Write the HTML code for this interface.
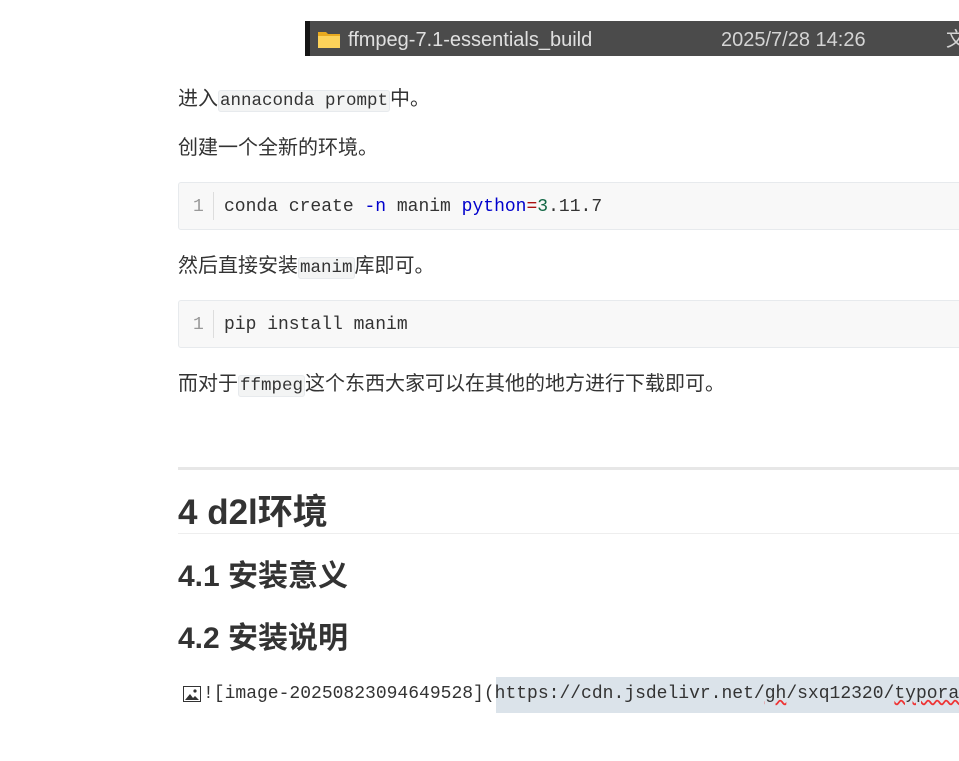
<!DOCTYPE html>
<html><head><meta charset="utf-8"><style>
body{margin:0;width:959px;height:761px;background:#fff;overflow:hidden;position:relative;font-family:"Liberation Sans","Noto Sans CJK SC",sans-serif;color:#333}
.a{position:absolute;white-space:nowrap}
.p{font-size:20px;line-height:26px}
.m{font-family:"Liberation Mono","DejaVu Sans Mono",monospace;font-size:18px;letter-spacing:0}
.ic{background:#f3f4f4;border:1px solid #e7eaed;border-radius:3px;padding:0 1px;font-size:17.5px}
.cb{position:absolute;left:178px;width:790px;height:48px;background:#f8f8f8;border:1px solid #e7eaed;border-radius:3px;box-sizing:border-box}
.ln{position:absolute;left:14px;top:12px;color:#999;font-family:"Liberation Mono",monospace;font-size:18px;line-height:24px}
.sep{position:absolute;left:34px;top:9px;width:1px;height:28px;background:#ddd}
.ct{position:absolute;left:45px;top:12px;line-height:24px;color:#333}
h1,h2{margin:0;font-weight:bold}
</style></head><body>
<div class="a" style="left:305px;top:21px;width:660px;height:35px;background:#4b4b4b;border-left:5px solid #151515;box-sizing:border-box"></div>
<svg class="a" style="left:317px;top:29px" width="24" height="20" viewBox="0 0 24 20"><path d="M1 3h8l2 2h12v14H1z" fill="#e8a91f"/><path d="M1 7h22v12H1z" fill="#fcd25a"/></svg>
<div class="a" style="left:348px;top:27px;font-size:20px;color:#e0e0e0;line-height:26px">ffmpeg-7.1-essentials_build</div>
<div class="a" style="left:721px;top:27px;font-size:20px;color:#d4d4d4;line-height:26px">2025/7/28 14:26</div>
<div class="a" style="left:946px;top:27px;font-size:20px;color:#d4d4d4;line-height:26px">文</div>

<div class="a p" style="left:178px;top:86px">进入<span class="m ic">annaconda prompt</span>中。</div>
<div class="a p" style="left:178px;top:135px">创建一个全新的环境。</div>
<div class="cb" style="top:182px"><div class="ln">1</div><div class="sep"></div><div class="ct m">conda create <span style="color:#00c">-n</span> manim <span style="color:#00c">python</span><span style="color:#a11">=</span><span style="color:#164">3</span>.11.7</div></div>
<div class="a p" style="left:178px;top:253px">然后直接安装<span class="m ic">manim</span>库即可。</div>
<div class="cb" style="top:300px"><div class="ln">1</div><div class="sep"></div><div class="ct m">pip install manim</div></div>
<div class="a p" style="left:178px;top:371px">而对于<span class="m ic">ffmpeg</span>这个东西大家可以在其他的地方进行下载即可。</div>

<div class="a" style="left:178px;top:467px;width:790px;height:3px;background:#e7e7e7"></div>
<h1 class="a" style="left:178px;top:490px;font-size:35px;line-height:46px">4 d2l环境</h1>
<div class="a" style="left:178px;top:533px;width:790px;height:1px;background:#eee"></div>
<h2 class="a" style="left:178px;top:558px;font-size:30px;line-height:38px">4.1 安装意义</h2>
<h2 class="a" style="left:178px;top:620px;font-size:30px;line-height:38px">4.2 安装说明</h2>

<div class="a" style="left:496px;top:677px;width:470px;height:36px;background:#dbe3ea"></div>
<svg class="a" style="left:183px;top:686px" width="18" height="16" viewBox="0 0 18 16"><rect x="0.5" y="0.5" width="17" height="15" fill="#fff" stroke="#333"/><path d="M2 14l5-6 3 4 2-2 4 4z" fill="#333"/><circle cx="12" cy="5" r="1.6" fill="#333"/></svg>
<div class="a m" style="left:203px;top:682px;line-height:24px;color:#333">![image-20250823094649528](https://cdn.jsdelivr.net/<span style="text-decoration:underline wavy #e33">gh</span>/sxq12320/<span style="text-decoration:underline wavy #e33">typora</span></div>
</body></html>
